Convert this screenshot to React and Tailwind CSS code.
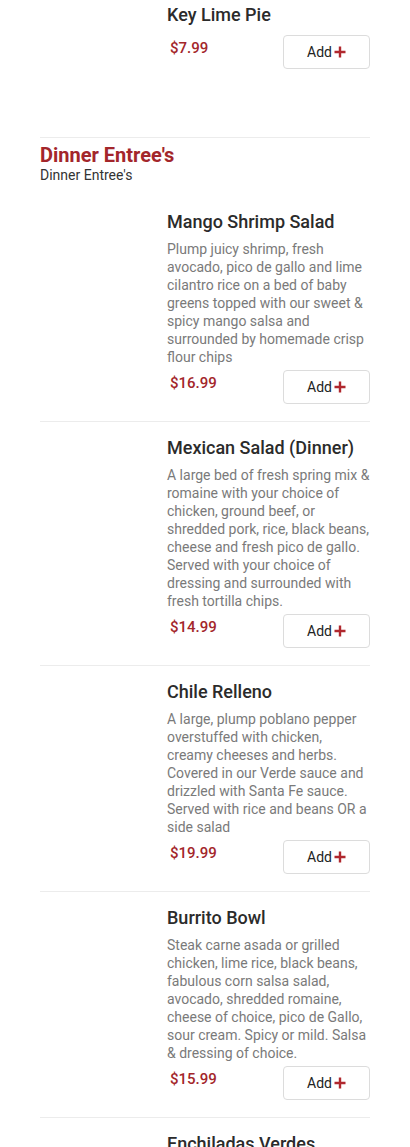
import React from 'react';

const DESSERTS_TAIL = [{ name: 'Key Lime Pie', price: '$7.99' }];

const DINNER = [
  {
    name: 'Mango Shrimp Salad',
    desc: 'Plump juicy shrimp, fresh avocado, pico de gallo and lime cilantro rice on a bed of baby greens topped with our sweet & spicy mango salsa and surrounded by homemade crisp flour chips',
    price: '$16.99',
  },
  {
    name: 'Mexican Salad (Dinner)',
    desc: 'A large bed of fresh spring mix & romaine with your choice of chicken, ground beef, or shredded pork, rice, black beans, cheese and fresh pico de gallo. Served with your choice of dressing and surrounded with fresh tortilla chips.',
    price: '$14.99',
  },
  {
    name: 'Chile Relleno',
    desc: 'A large, plump poblano pepper overstuffed with chicken, creamy cheeses and herbs. Covered in our Verde sauce and drizzled with Santa Fe sauce. Served with rice and beans OR a side salad',
    price: '$19.99',
  },
  {
    name: 'Burrito Bowl',
    desc: 'Steak carne asada or grilled chicken, lime rice, black beans, fabulous corn salsa salad, avocado, shredded romaine, cheese of choice, pico de Gallo,  sour cream. Spicy or mild. Salsa & dressing of choice.',
    price: '$15.99',
  },
  {
    name: 'Enchiladas Verdes',
    desc: 'Corn tortillas filled with chicken and cheese, topped with our verde sauce.',
    price: '$15.99',
  },
];

const AddButton = () => (
  <button className="flex items-center justify-center w-[87px] h-[34px] rounded-[4px] border border-[#dcdcdc] bg-white text-[14px] text-[#222]">
    Add
    <svg className="w-[12px] h-[12px] ml-[2px]" viewBox="0 0 12 12">
      <path d="M6 0.5v11M0.5 6h11" stroke="#b0282e" strokeWidth="2.4" />
    </svg>
  </button>
);

const MenuItem = ({ item, first, last }) => (
  <div className={`flex gap-3 ${first ? 'pt-[3px]' : 'pt-[14px]'} pb-[17px] ${last ? '' : 'border-b border-[#ececec]'}`}>
    {/* image placeholder (no photo) */}
    <div className="w-[115px] shrink-0" />
    <div className="flex-1 min-w-0">
      <h3 className="text-[18px] leading-[24px] font-medium text-[#2b2b2b]">{item.name}</h3>
      {item.desc && (
        <p className="mt-[6px] text-[14px] leading-[18px] text-[#7a7a7a] whitespace-pre-wrap">{item.desc}</p>
      )}
      <div className={`flex items-start justify-between ${item.desc ? 'mt-1' : 'mt-2'}`}>
        <span className="pt-[4px] pl-[3px] text-[15px] leading-[18px] font-medium text-[#a3262b]">{item.price}</span>
        <AddButton />
      </div>
    </div>
  </div>
);

export default function App() {
  return (
    <div className="bg-white min-h-screen font-['Roboto',sans-serif] px-10">
      <section className="pb-[51px]">
        {DESSERTS_TAIL.map((item, i) => (
          <MenuItem key={item.name} item={item} first={i === 0} last />
        ))}
      </section>

      <section className="border-t border-[#ececec] pt-[6px]">
        <h2 className="text-[20px] leading-[22px] font-bold text-[#a3262b]">Dinner Entree's</h2>
        <p className="text-[14px] leading-[18px] text-[#333] mb-3">Dinner Entree's</p>
        {DINNER.map((item) => (
          <MenuItem key={item.name} item={item} />
        ))}
      </section>
    </div>
  );
}
